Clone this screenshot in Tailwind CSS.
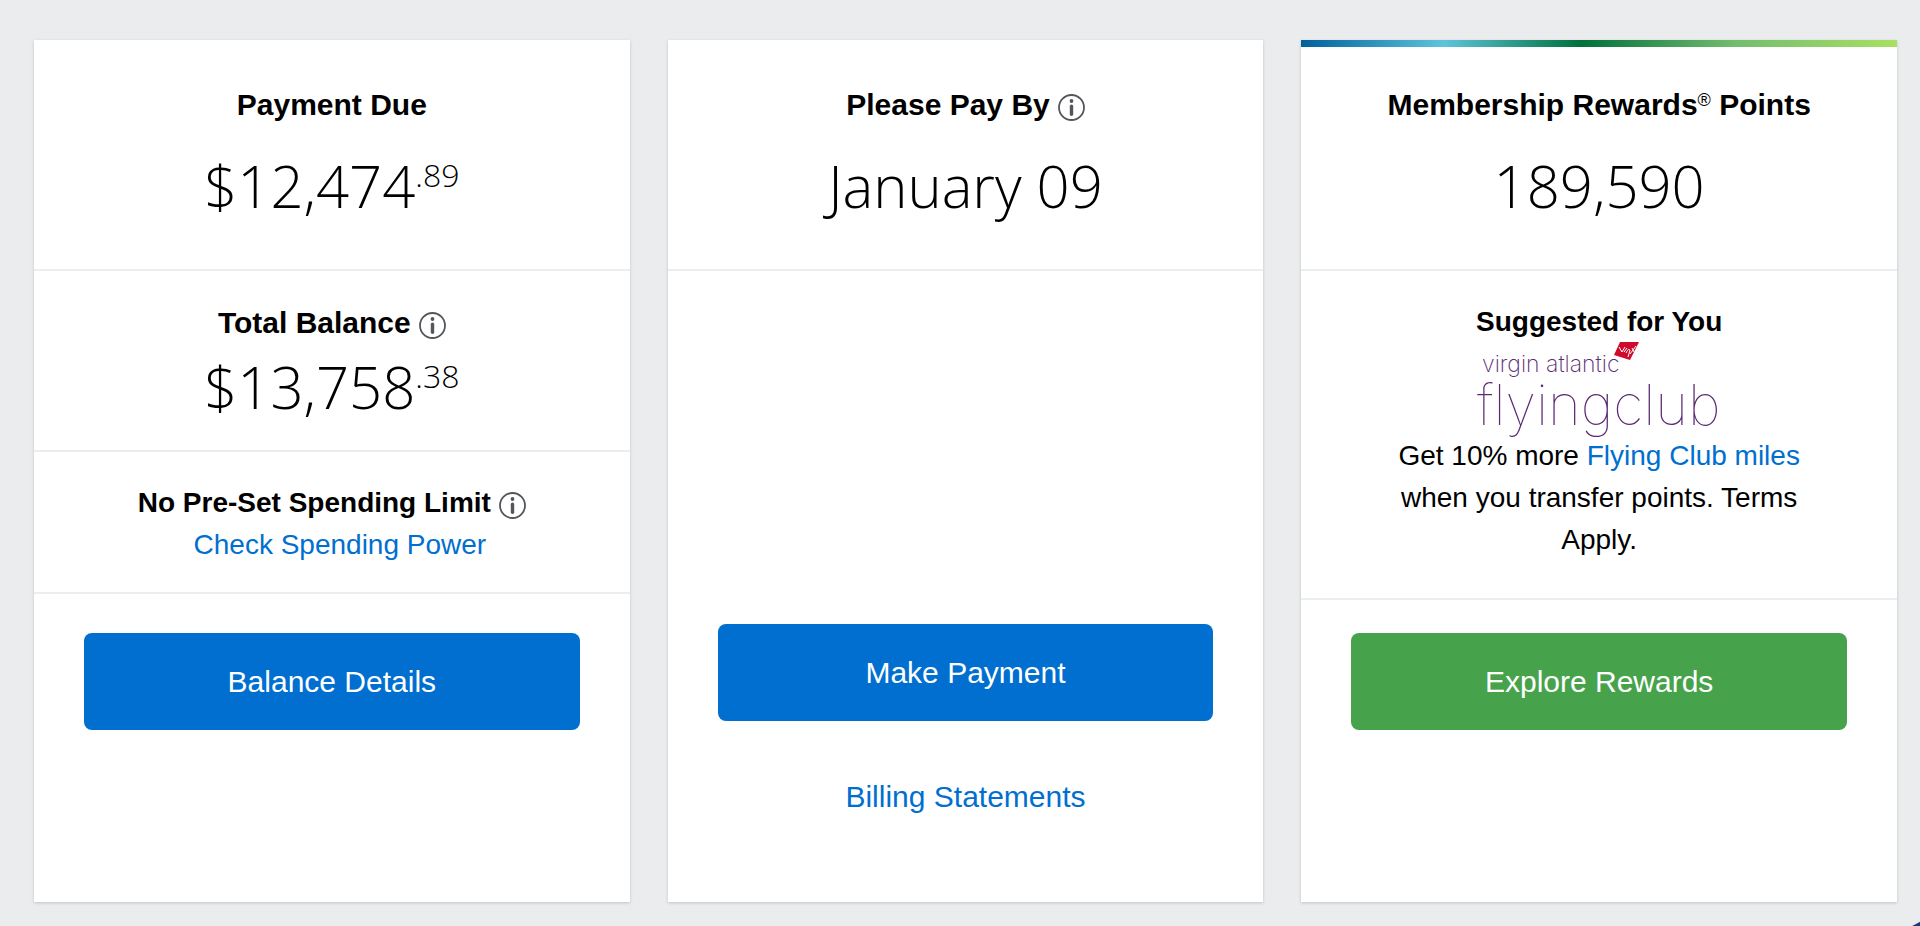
<!DOCTYPE html>
<html lang="en">

<head>
  <meta charset="UTF-8" />
  <meta name="viewport" content="width=device-width, initial-scale=1.0" />
  <title>Account Summary</title>
  <script src="https://cdn.jsdelivr.net/npm/@tailwindcss/browser@4"></script>
</head>

<body class="bg-[#ebeced] text-black font-['Liberation_Sans',Arial,sans-serif]">
  <!-- info icon, reused by the card headings -->
  <svg class="hidden">
    <symbol id="info" viewBox="0 0 27 27">
      <circle cx="13.5" cy="13.5" r="12.5" fill="none" stroke="#53565a" stroke-width="1.8" />
      <circle cx="13.5" cy="7" r="1.9" fill="#53565a" />
      <path d="M13.5 12.2v8" stroke="#53565a" stroke-width="3.4" stroke-linecap="round" />
    </symbol>
  </svg>

  <main class="min-h-screen grid grid-cols-1 lg:grid-cols-3 gap-[38px] pt-10 pb-6 pl-[34px] pr-[23px] text-center">

    <!-- Balance card -->
    <section class="bg-white shadow-[0_1px_3px_rgba(0,0,0,0.18)] flex flex-col">
      <div class="pt-[45px] pb-[47px] border-b-2 border-[#ecedee]">
        <h2 class="text-[30px] leading-10 font-bold">Payment Due</h2>
        <p class="mt-[25px] flex justify-center items-start font-['Open_Sans',sans-serif] font-light text-[58px] leading-[72px]">$12,474<span class="text-[32px] leading-[50px]">.89</span></p>
      </div>
      <div class="pt-8 pb-[27px] border-b-2 border-[#ecedee]">
        <div class="flex justify-center items-center gap-2">
          <h2 class="text-[30px] leading-10 font-bold">Total Balance</h2>
          <button type="button" aria-label="About total balance" class="pt-1"><svg class="size-[27px]"><use href="#info" /></svg></button>
        </div>
        <p class="mt-2 flex justify-center items-start font-['Open_Sans',sans-serif] font-light text-[58px] leading-[72px]">$13,758<span class="text-[32px] leading-[50px]">.38</span></p>
      </div>
      <div class="pt-[30px] pb-[26px] border-b-2 border-[#ecedee]">
        <div class="flex justify-center items-center gap-2">
          <h2 class="text-[28px] leading-[42px] font-bold">No Pre-Set Spending Limit</h2>
          <button type="button" aria-label="About spending limit" class="pt-1"><svg class="size-[27px]"><use href="#info" /></svg></button>
        </div>
        <a href="#" class="pl-4 text-[28px] leading-[42px] text-[#006fcf]">Check Spending Power</a>
      </div>
      <div class="px-[50px] pt-[39px] pb-10">
        <button type="button" class="w-full rounded-lg bg-[#006fcf] text-white text-[30px] leading-[41px] py-7">Balance Details</button>
      </div>
    </section>

    <!-- Payment card -->
    <section class="bg-white shadow-[0_1px_3px_rgba(0,0,0,0.18)] flex flex-col">
      <div class="pt-[45px] pb-[47px] border-b-2 border-[#ecedee]">
        <div class="flex justify-center items-center gap-2">
          <h2 class="text-[30px] leading-10 font-bold">Please Pay By</h2>
          <button type="button" aria-label="About the due date" class="pt-1"><svg class="size-[27px]"><use href="#info" /></svg></button>
        </div>
        <p class="mt-[25px] font-['Open_Sans',sans-serif] font-light text-[58px] leading-[72px]">January 09</p>
      </div>
      <div class="mt-auto px-[50px] pt-10 pb-[84px]">
        <button type="button" class="w-full rounded-lg bg-[#006fcf] text-white text-[30px] leading-[41px] py-7">Make Payment</button>
        <a href="#" class="block mt-[55px] text-[30px] leading-[42px] text-[#006fcf]">Billing Statements</a>
      </div>
    </section>

    <!-- Rewards card -->
    <section class="bg-white shadow-[0_1px_3px_rgba(0,0,0,0.18)] flex flex-col">
      <div class="h-[7px] bg-[linear-gradient(90deg,#00609c_0%,#5fc3da_24%,#00703c_47%,#74bd6e_73%,#a8e063_100%)]"></div>
      <div class="pt-[38px] pb-[47px] border-b-2 border-[#ecedee]">
        <h2 class="text-[30px] leading-10 font-bold">Membership Rewards<sup class="text-[18px] leading-none font-normal">®</sup> Points</h2>
        <p class="mt-[25px] font-['Open_Sans',sans-serif] font-light text-[58px] leading-[72px]">189,590</p>
      </div>
      <div class="px-20 pt-[30px] pb-[37px] border-b-2 border-[#ecedee]">
        <h2 class="text-[28px] leading-[42px] font-bold">Suggested for You</h2>
        <svg class="block mx-auto w-[244px] h-[92px] overflow-visible" viewBox="0 0 244 92" role="img" aria-label="Virgin Atlantic Flying Club">
          <g fill="#5b2a72" font-family="Inter, sans-serif">
            <text x="5" y="29" font-size="23" font-weight="200">virgin atlantic</text>
            <text x="0" y="82" font-size="56" font-weight="100">flyingclub</text>
          </g>
          <path d="M143 -1L162 -1L153 17L137 12Z" fill="#cf0a2c" />
          <path d="M142 4l3 5 3-5M147 9l3-4M149 10c2-4 3-4 4-3l-2 7M155 5l2 4M159 3l-6 8" fill="none" stroke="#fff" stroke-width="1" />
        </svg>
        <p class="text-[28px] leading-[42px]">Get 10% more <a href="#" class="text-[#006fcf]">Flying Club miles</a> when you transfer points. Terms Apply.</p>
      </div>
      <div class="px-[50px] pt-[33px] pb-10">
        <button type="button" class="w-full rounded-lg bg-[#46a34c] text-white text-[30px] leading-[41px] py-7">Explore Rewards</button>
      </div>
    </section>
  </main>

  <!-- Chat bubble, mostly off the corner -->
  <button type="button" aria-label="Chat" class="fixed -right-[55px] -bottom-[73px] size-20 rounded-full bg-[#1b3a7a]"></button>
</body>

</html>
